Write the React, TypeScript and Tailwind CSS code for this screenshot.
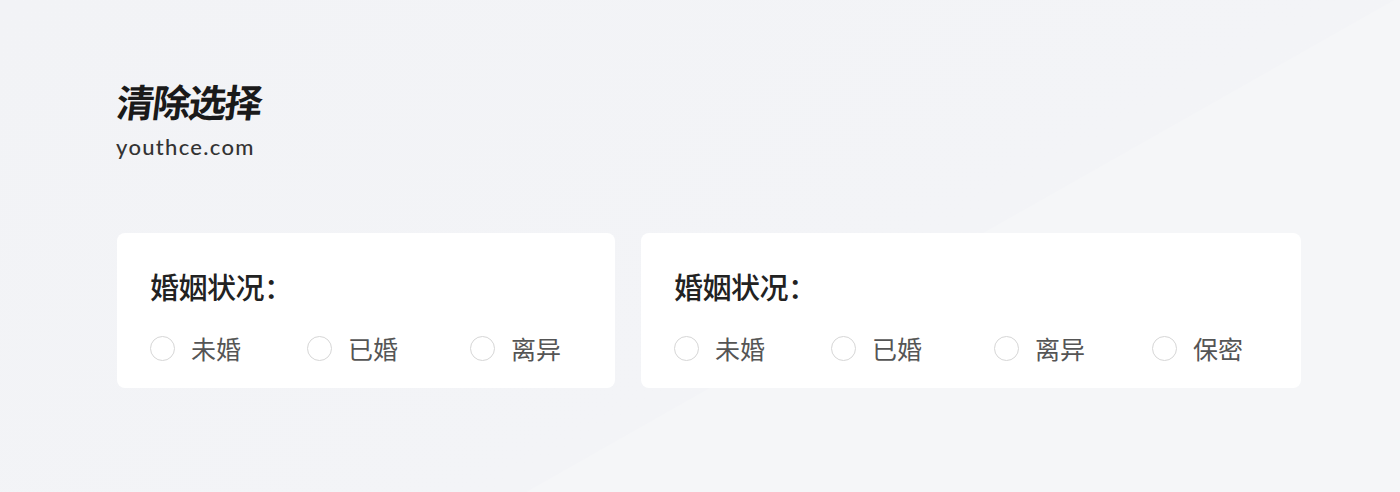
import React from "react";

const cjk = "font-['Noto_Sans_CJK_SC','Noto_Sans',sans-serif]";

type RadioGroupProps = {
  options: string[];
};

const RadioGroup = ({ options }: RadioGroupProps) => {
  return (
    <div className="grid grid-cols-[157px_163px_158px_auto] items-center">
      {options.map((opt) => (
        <label key={opt} className="flex items-center gap-[16px] cursor-pointer">
          <span className="w-[25px] h-[25px] rounded-full border-[1.5px] border-[#d6d6d6] bg-white" />
          <span className={`${cjk} text-[25px] leading-[34px] text-[#555]`}>{opt}</span>
        </label>
      ))}
    </div>
  );
};

const Card = ({ options, width }: { options: string[]; width: string }) => {
  return (
    <div className={`${width} h-[155px] bg-white rounded-[8px] pl-[33px] pt-[33px]`}>
      <div className={`${cjk} text-[29px] leading-[40px] font-medium text-[#222] tracking-[-0.5px]`}>
        婚姻状况：
      </div>
      <div className="mt-[25px]">
        <RadioGroup options={options} />
      </div>
    </div>
  );
};

export default function App() {
  return (
    <main className="relative w-[1400px] h-[492px] overflow-hidden bg-[linear-gradient(150deg,#f2f3f6_0%,#f3f4f7_60%,#f4f5f7_100%)]">
      {/* subtle diagonal light area, decoration only */}
      <div className="absolute inset-0 bg-[#f5f6f8] [clip-path:polygon(99.6%_0,100%_0,100%_100%,37.6%_100%)] pointer-events-none" />
      <div className="relative pl-[116px] pt-[76px]">
        <h1 className={`${cjk} inline-block -ml-[2px] [transform:skewX(-7deg)] origin-bottom-left text-[38px] leading-[50px] font-bold text-[#1a1a1a] tracking-[-2px]`}>
          清除选择
        </h1>
        <p className="font-['Lato',sans-serif] text-[22px] leading-[28px] font-medium tracking-[1.3px] text-[#333] mt-[7px]">
          youthce.com
        </p>
        <div className="flex gap-[26px] mt-[72px] pl-[1px]">
          <Card width="w-[498px]" options={["未婚", "已婚", "离异"]} />
          <Card width="w-[660px]" options={["未婚", "已婚", "离异", "保密"]} />
        </div>
      </div>
    </main>
  );
}
